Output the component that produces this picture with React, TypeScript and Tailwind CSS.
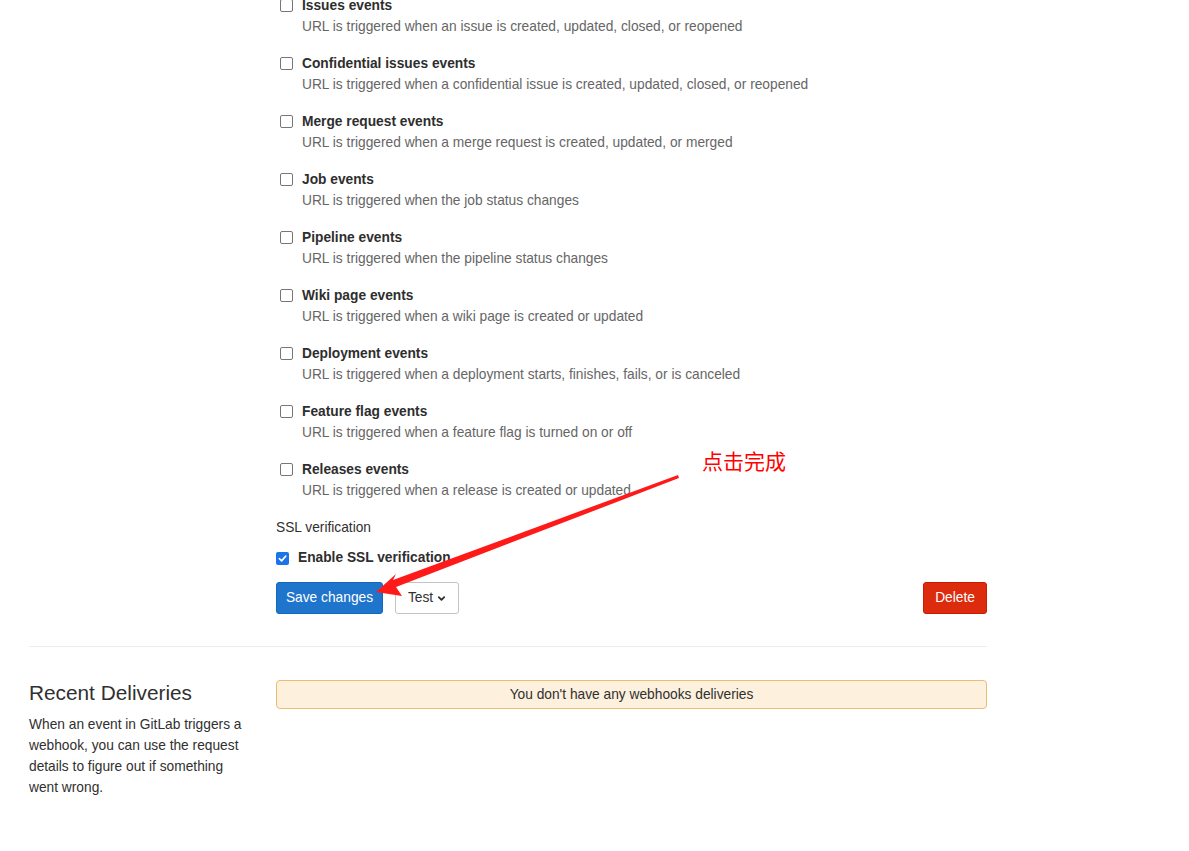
import React from "react";

const events = [
  ["Issues events", "URL is triggered when an issue is created, updated, closed, or reopened"],
  ["Confidential issues events", "URL is triggered when a confidential issue is created, updated, closed, or reopened"],
  ["Merge request events", "URL is triggered when a merge request is created, updated, or merged"],
  ["Job events", "URL is triggered when the job status changes"],
  ["Pipeline events", "URL is triggered when the pipeline status changes"],
  ["Wiki page events", "URL is triggered when a wiki page is created or updated"],
  ["Deployment events", "URL is triggered when a deployment starts, finishes, fails, or is canceled"],
  ["Feature flag events", "URL is triggered when a feature flag is turned on or off"],
  ["Releases events", "URL is triggered when a release is created or updated"],
];

function Box({ checked }: { checked?: boolean }) {
  if (checked) {
    return (
      <span className="w-[13px] h-[13px] rounded-[2px] bg-[#1a73e8] flex items-center justify-center shrink-0">
        <svg width="9" height="9" viewBox="0 0 10 10" fill="none" stroke="white" strokeWidth="1.8" strokeLinecap="round" strokeLinejoin="round">
          <polyline points="1.5 5.2 4 7.6 8.6 2.4" />
        </svg>
      </span>
    );
  }
  return <span className="w-[13px] h-[13px] rounded-[2px] border border-[#767676] bg-white shrink-0" />;
}

export default function App() {
  return (
    <div className="relative w-[1189px] h-[851px] overflow-hidden bg-white text-[13.75px] text-[#303030] font-['Liberation_Sans',Arial,sans-serif]">
      <div className="w-[958px] ml-[29px] -mt-[5.5px]">
        <div className="pl-[247px]">
          {events.map(([title, desc]) => (
            <div key={title} className="flex gap-[9px] pl-[4px] mb-[16px]">
              <div className="h-[21px] flex items-center">
                <Box />
              </div>
              <div>
                <div className="leading-[21px] font-bold text-[#2e2e2e]">{title}</div>
                <div className="pt-px leading-[20px] text-[#666666]">{desc}</div>
              </div>
            </div>
          ))}
          <div className="pt-px leading-[20px] text-[#303030]">SSL verification</div>
          <div className="flex items-center gap-[9px] mt-[10px] h-[20px] pt-px">
            <Box checked />
            <span className="font-bold text-[#2e2e2e]">Enable SSL verification</span>
          </div>
          <div className="flex items-center mt-[14px]">
            <button className="h-[32px] w-[107px] pt-px rounded-[3px] bg-[#1f75cb] border border-[#1068bf] text-white">
              Save changes
            </button>
            <button className="ml-[12px] h-[32px] w-[64px] pt-px rounded-[3px] bg-white border border-[#c4c4c4] text-[#303030] flex items-center justify-center gap-[4px]">
              Test
              <svg width="9" height="9" viewBox="0 0 10 10" fill="none" stroke="#303030" strokeWidth="2" strokeLinecap="round" strokeLinejoin="round">
                <polyline points="2 3.5 5 6.5 8 3.5" />
              </svg>
            </button>
            <button className="ml-auto h-[32px] w-[64px] pt-px rounded-[3px] bg-[#dd2b0e] border border-[#c91c00] text-white">
              Delete
            </button>
          </div>
        </div>
        <div className="mt-[32px] border-t border-[#ececec]" />
        <div className="flex mt-[32px]">
          <div className="w-[247px] pr-[30px]">
            <h4 className="text-[20.8px] leading-[28px] text-[#303030] mb-[7px]">Recent Deliveries</h4>
            <p className="leading-[21px] text-[#303030]">
              When an event in GitLab triggers a webhook, you can use the request details to figure out if something went wrong.
            </p>
          </div>
          <div className="flex-1 pt-px">
            <div className="h-[29px] pt-[2px] rounded-[4px] border border-[#e9be74] bg-[#fdf1dd] flex items-center justify-center text-[#303030]">
              You don't have any webhooks deliveries
            </div>
          </div>
        </div>
      </div>

      {/* annotation */}
      <div className="absolute left-[702px] top-[447px] text-[21px] leading-[26px] text-[#ff0000] font-['Noto_Sans_CJK_SC',sans-serif]">
        点击完成
      </div>
      <svg className="absolute left-0 top-0 pointer-events-none" width="1189" height="851">
        <polygon points="376,592 396,574 393,580 678,475 679,478 396,587 402,596" fill="#ff1a1a" />
      </svg>
    </div>
  );
}
